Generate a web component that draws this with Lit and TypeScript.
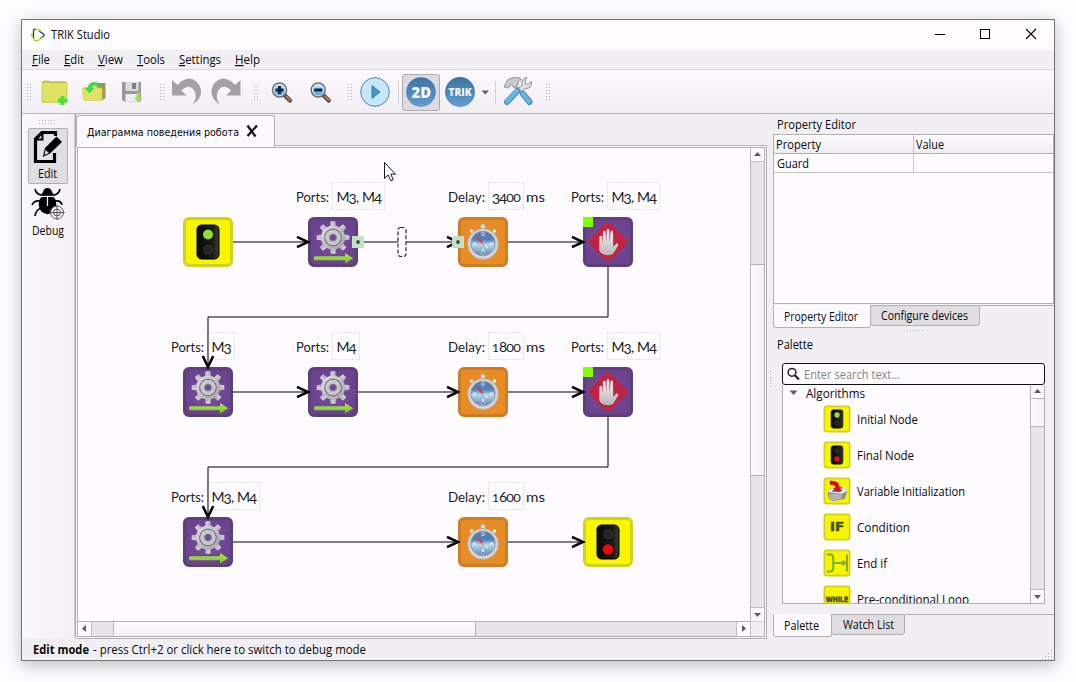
import { LitElement, html, svg, css, nothing } from "lit";
import { customElement } from "lit/decorators.js";

type Kind = "start" | "finish" | "motor" | "timer" | "stop" | "variable" | "if" | "endif" | "while";

interface Block {
  kind: Kind;
  x: number;
  y: number;
  label?: string;
  value?: string;
}

const BLOCKS: Block[] = [
  { kind: "start", x: 208, y: 242 },
  { kind: "motor", x: 333, y: 242, label: "Ports:", value: "M3, M4" },
  { kind: "timer", x: 483, y: 242, label: "Delay:", value: "3400" },
  { kind: "stop", x: 608, y: 242, label: "Ports:", value: "M3, M4" },
  { kind: "motor", x: 208, y: 392, label: "Ports:", value: "M3" },
  { kind: "motor", x: 333, y: 392, label: "Ports:", value: "M4" },
  { kind: "timer", x: 483, y: 392, label: "Delay:", value: "1800" },
  { kind: "stop", x: 608, y: 392, label: "Ports:", value: "M3, M4" },
  { kind: "motor", x: 208, y: 542, label: "Ports:", value: "M3, M4" },
  { kind: "timer", x: 483, y: 542, label: "Delay:", value: "1600" },
  { kind: "finish", x: 608, y: 542 },
];

const LINKS = [
  "M233 242H308", "M358 242H458", "M508 242H583",
  "M608 267V317H208V367",
  "M233 392H308", "M358 392H458", "M508 392H583",
  "M608 417V467H208V517",
  "M233 542H458", "M508 542H583",
];

const HEADS_RIGHT = [[308, 242], [458, 242], [583, 242], [308, 392], [458, 392], [583, 392], [458, 542], [583, 542]];
const HEADS_DOWN = [[208, 367], [208, 517]];

const PALETTE: { kind: Kind; name: string; width: number }[] = [
  { kind: "start", name: "Initial Node", width: 61 },
  { kind: "finish", name: "Final Node", width: 57 },
  { kind: "variable", name: "Variable Initialization", width: 108 },
  { kind: "if", name: "Condition", width: 53 },
  { kind: "endif", name: "End if", width: 30 },
  { kind: "while", name: "Pre-conditional Loop", width: 112 },
];

const MENUS: [string, number][] = [["File", 18], ["Edit", 20], ["View", 25], ["Tools", 28], ["Settings", 42], ["Help", 25]];

/* One line of text set to an exact advance width. */
const line = (text: string, width: number, cls = "", mnemonic = false) => html`
  <svg class="line ${cls}" width=${width} height="16">
    ${mnemonic
      ? svg`<text y="12" textLength=${width} lengthAdjust="spacingAndGlyphs"><tspan text-decoration="underline">${text[0]}</tspan>${text.slice(1)}</text>`
      : svg`<text y="12" textLength=${width} lengthAdjust="spacingAndGlyphs">${text}</text>`}
  </svg>`;

const FRAMES: Record<string, [string, string]> = {
  yellow: ["#f7f500", "#d3d01f"],
  purple: ["url(#purple)", "#5d3f7c"],
  orange: ["#e88c25", "#cd7d25"],
};

const frame = (name: string) => svg`
  <rect x="-23.5" y="-23.5" width="47" height="47" rx="4.5" fill=${FRAMES[name][0]} stroke=${FRAMES[name][1]} stroke-width="3"/>`;

const TEETH = [0, 45, 90, 135, 180, 225, 270, 315];

const trafficLight = (go: boolean) => svg`
  ${frame("yellow")}
  <rect x="-11" y="-17" width="22" height="34" rx="4.5" fill="url(#lamp)" stroke="#000"/>
  <circle cx="0" cy="-7.5" r=${go ? 5 : 4} fill=${go ? "#92dc35" : "#222"} stroke=${go ? "none" : "#3a3a3a"}/>
  <circle cx="0" cy="7.5" r=${go ? 4 : 5.2} fill=${go ? "#222" : "#ee0808"} stroke=${go ? "#3a3a3a" : "none"}/>`;

const glyph = (kind: Kind) => {
  switch (kind) {
    case "start": return trafficLight(true);
    case "finish": return trafficLight(false);
    case "motor": return svg`
      ${frame("purple")}
      <g transform="translate(0 -4.5)">
        ${TEETH.map(a => svg`<path transform="rotate(${a})" d="M-3 -10L-2.3 -16.3H2.3L3 -10Z" fill="url(#steel)"/>`)}
        <circle r="12" fill="url(#steel)"/>
        <circle r="8.3" fill="none" stroke="#77757c" stroke-width="1.2"/>
        <circle r="6" fill="none" stroke="#c9c8ce" stroke-width="3"/>
        <circle r="3.4" fill="#71499a" stroke="#85828a"/>
      </g>
      <path d="M-18.5 14.2H12V11L20.3 16.2L12 21.5V18.2H-18.5Q-20 16.2 -18.5 14.2Z" fill="url(#green)"/>`;
    case "timer": return svg`
      ${frame("orange")}
      <circle cx="0" cy="-15.5" r="2.3" fill="#e6e6ea" stroke="#a9a6a4" stroke-width=".7"/>
      <circle cx="-11.5" cy="-11" r="1.7" fill="#f1eff0"/><circle cx="11.5" cy="-11" r="1.7" fill="#f1eff0"/>
      <circle cx="0" cy="2" r="15.4" fill="#d5d5da" stroke="#b5aaa4" stroke-width=".8"/>
      <circle cx="0" cy="1.5" r="12.2" fill="url(#dial)" stroke="#8d97ab"/>
      <path d="M0 -9v3M0 10v-3M-10 1.5h3M10 1.5h-3" stroke="#dfe6f0" stroke-width="2"/>
      <circle cx="0" cy="-8" r="1.6" fill="#607ba4" stroke="#d6deea" stroke-width=".8"/><circle cx="0" cy="11" r="1.6" fill="#607ba4" stroke="#d6deea" stroke-width=".6"/>
      <path d="M-6 -5L1 3" stroke="#e2384f" stroke-width="2"/><path d="M0 2L5 6" stroke="#e4e6ea" stroke-width="1.4"/>
      <circle cx="0" cy="2" r="1.6" fill="#a9b5c8"/>`;
    case "stop": return svg`
      ${frame("purple")}
      <rect x="-15" y="-15" width="30" height="30" rx="5" transform="rotate(45)" fill="#bd2442"/>
      <path d="M-8.8 8L-8.5 -5.5Q-7.2 -7 -6.2 -5.5L-5.6 1.2L-5 -10.5Q-3.8 -12 -2.5 -10.5L-1.9 0L-1.2 -12.3Q0 -13.7 1.2 -12.3L1.6 0L2.6 -10.8Q3.9 -12.2 5 -10.5L5.3 5L8.5 1.2Q10.5 1.2 10.3 3L6 10.5Q4.5 13.3 0 13.3Q-7.5 13 -8.8 8Z" fill="url(#hand)"/>`;
    case "variable": return svg`
      ${frame("yellow")}
      <path d="M-17 1L-11 -5L15 -5L19 1L14 15L-8 19L-16 13Z" fill="#8d8c8b"/><path d="M-18 2L-10 -5L14 -6L19 0L9 5Z" fill="#eeeef0"/><path d="M-15 5L9 6V15L-8 18L-15 13Z" fill="#b4b3b5"/><path d="M-10 1L-6 -3H11L6 2Z" fill="#55534f"/>
      <path d="M-13 -19Q4 -21 5 -7L10 -8L2 2L-8 -5L-3 -6Q-4 -13 -13 -11Z" fill="#d60c1e"/>`;
    case "if": return svg`${frame("yellow")}<text x="-13" y="8" class="badge" font-size="22" textLength="26" lengthAdjust="spacingAndGlyphs">IF</text>`;
    case "endif": return svg`
      ${frame("yellow")}
      <path d="M-19 -16H-13Q-7 -16 -7 -9V9Q-7 16 -13 16H-19M-7 0H14M10 -4L16 0L10 4" fill="none" stroke="#7cb62b" stroke-width="4"/><path d="M18.5 -16V16" stroke="#9ca023" stroke-width="3.5"/>`;
    case "while": return svg`${frame("yellow")}<text x="-21" y="5" class="badge" font-size="13" textLength="42" lengthAdjust="spacingAndGlyphs">WHILE</text>`;
  }
};

/* Digits in the scene are old-style: 3 and 4 descend, 0 and 1 are low. */
const figure = (ch: string, x: number, y: number) => {
  if ("34".includes(ch)) return svg`<text x=${x} y=${y + 2}>${ch}</text>`;
  if (ch === "0") return svg`<text x=${x} y=${y} style="font-size:11.8px" textLength="7.6" lengthAdjust="spacingAndGlyphs">0</text>`;
  if (ch === "1") return svg`<text x=${x} y=${y} style="font-size:12px">1</text>`;
  return svg`<text x=${x} y=${y}>${ch}</text>`;
};

const GLYPH_STEP: Record<string, number> = { M: 12, ",": 3, " ": 3, "3": 7.4, "4": 8.5 };

const sceneValue = (value: string, x: number, y: number) => {
  let cursor = x;
  const numeric = value[0] !== "M";
  return [...value].map(ch => {
    const at = cursor;
    cursor += numeric ? 7.1 : GLYPH_STEP[ch];
    return figure(ch, at, y);
  });
};

const caption = (b: Block) => {
  if (!b.label || !b.value) return nothing;
  const delay = b.label === "Delay:";
  const base = b.y - 40;
  const left = delay ? b.x - 35 : b.x - 37;
  const boxX = delay ? b.x + 5 : b.x - 1;
  const boxW = delay ? 36 : b.value.length > 2 ? 53 : 28;
  return svg`
    <text x=${left} y=${base} textLength=${delay ? 37 : 33} lengthAdjust="spacingAndGlyphs">${b.label}</text>
    <rect x=${boxX + 0.5} y=${b.y - 59.5} width=${boxW - 1} height="27" class="dotted"/>
    ${sceneValue(b.value, delay ? b.x + 9 : b.x + 3.5, base)}
    ${delay ? svg`<text x=${b.x + 43} y=${base} textLength="19" lengthAdjust="spacingAndGlyphs">ms</text>` : nothing}`;
};

const slot = (x: number, width: number, art: unknown) => html`
  <svg class="slot" width=${width} height="43" viewBox="${x} 70 ${width} 43">${art}</svg>`;

const grip = (x: number, y: number, cols: number, rows: number) =>
  Array.from({ length: cols * rows }, (_, i) =>
    svg`<rect x=${x + (i % cols) * 3} y=${y + Math.floor(i / cols) * 3} width="1" height="1" fill="#b4b2b6"/>`);

const lens = (cx: number, plus: boolean) => svg`
  <path d="M${cx + 5} 95L${cx + 10.5} 100.5" stroke="#5a4a42" stroke-width="4.5" stroke-linecap="round"/>
  <path d="M${cx + 7} 96.5L${cx + 10.5} 100" stroke="#a97852" stroke-width="2.4" stroke-linecap="round"/>
  <circle cx=${cx} cy="90" r="7" fill="url(#glass)" stroke="#6a6b70" stroke-width="1.5"/>
  <circle cx=${cx} cy="90" r="5.8" fill="none" stroke="#cfe3f1"/>
  <path d=${plus ? `M${cx - 4} 90H${cx + 4}M${cx} 86V94` : `M${cx - 4} 90H${cx + 4}`} stroke="#06284f" stroke-width="3"/>`;

const arrowButton = (dir: string) => {
  const d: Record<string, string> = {
    up: "M3.5 8.5L7 4.5L10.5 8.5Z", down: "M3.5 5.5L7 9.5L10.5 5.5Z",
    left: "M8.5 3.5L4.5 7L8.5 10.5Z", right: "M5.5 3.5L9.5 7L5.5 10.5Z",
  };
  return html`<svg class="arrow" width="13" height="13" viewBox="0.5 0.5 13 13"><path d=${d[dir]} fill="#5b595d"/></svg>`;
};

@customElement("app-root")
export class AppRoot extends LitElement {
  static styles = css`
    :host { display: block; width: 1076px; height: 682px; overflow: hidden; background: #fdfcfe; box-sizing: border-box; padding: 19px 21px 21px; font-family: "Open Sans", "Noto Sans", sans-serif; font-size: 12px; color: #0b0b0c; }
    * { box-sizing: border-box; }
    svg { display: block; flex: none; }
    .line { overflow: visible; }
    .line text { font-family: "Open Sans", "Noto Sans", sans-serif; font-size: 12px; fill: #09090b; }
    .line.bold text { font-weight: 700; }
    .line.hint text { fill: #858388; }
    .line.cyr text { font-family: "DejaVu Sans", sans-serif; font-size: 11.2px; }
    .window { width: 1034px; height: 642px; border: 1px solid #737275; background: #f1eff3; display: flex; flex-direction: column; box-shadow: 0 4px 16px rgba(0,0,0,.26); }
    .title { height: 30px; flex: none; background: #fefcff; display: flex; align-items: center; padding-left: 9px; }
    .title .line { margin-left: 6px; }
    .controls { margin-left: auto; }
    .menu { height: 20px; flex: none; display: flex; gap: 14px; padding: 2px 10px; border-bottom: 1px solid #d9d7db; }
    .tools { height: 44px; flex: none; display: flex; border-bottom: 1px solid #b7b5b9; background: linear-gradient(#fbf9fd, #f1eff3); }
    .main { height: 524px; flex: none; display: flex; }
    .modes { width: 53px; flex: none; background: linear-gradient(90deg, #faf8fc, #f2f0f4); border-right: 1px solid #d0ced2; display: flex; flex-direction: column; align-items: center; padding-top: 5px; }
    .mode { width: 40px; height: 56px; border: 1px solid transparent; border-radius: 2px; display: flex; flex-direction: column; align-items: center; justify-content: space-between; padding: 1px 0 1px; margin-right: 1px; }
    .mode.on { background: #dfdde1; border-color: #b2b0b4; }
    .mode.second { margin-top: 1px; }
    .editor { width: 692px; flex: none; display: flex; flex-direction: column; padding-top: 1px; height: 523px; border-left: 1px solid #aaa8ac; }
    .tabbar { height: 30px; flex: none; display: flex; }
    .doc { width: 199px; height: 32px; flex: none; background: #fbf9fd; border: 1px solid #b2b0b4; border-bottom: none; border-radius: 3px 3px 0 0; padding: 8px 0 0 10px; display: flex; gap: 7px; z-index: 1; }
    .rest { flex: 1; border-bottom: 1px solid #b2b0b4; height: 31px; }
    .outer { flex: 1; border: 1px solid #b2b0b4; border-left: none; border-top: none; padding: 1px 1px 1px 1px; margin-top: 1px; background: #f7f5f9; }
    .view { height: 100%; border: 1px solid #b2b0b4; display: grid; grid-template-columns: 672px 14px; grid-template-rows: 1fr 15px; background: #fdfbfe; }
    .canvas { overflow: hidden; width: 672px; height: 473px; }
    .canvas text { font-family: Lato, "Open Sans", sans-serif; font-size: 14px; fill: #1b1b1e; }
    .dotted { fill: none; stroke: #c9c5cb; stroke-dasharray: 1 2; }
    .vbar { border-left: 1px solid #b7b5b9; display: flex; flex-direction: column; }
    .hbar { border-top: 1px solid #b7b5b9; display: flex; }
    .arrow { background: #fbf9fd; }
    .trackv { border-top: 1px solid #c0bec2; background: #e6e4e8; }
    .thumbv { border-top: 1px solid #b7b5b9; border-bottom: 1px solid #b7b5b9; background: linear-gradient(90deg, #fdfbff, #f2f0f4); }
    .trackh { border-left: 1px solid #c0bec2; background: #e6e4e8; }
    .thumbh { border-left: 1px solid #b7b5b9; border-right: 1px solid #b7b5b9; background: linear-gradient(#fdfbff, #f2f0f4); }
    .v1 { height: 103px; } .v2 { height: 212px; } .v3 { flex: 1; border: 0; border-bottom: 1px solid #c0bec2; }
    .h1 { width: 22px; } .h2 { width: 363px; } .h3 { flex: 1; border: 0; border-right: 1px solid #c0bec2; }
    .corner { border-top: 1px solid #d1cfd3; border-left: 1px solid #c0bec2; background: #f1eff3; }
    .split { width: 6px; flex: none; padding: 256px 0 0 2px; }
    .side { flex: 1; display: flex; flex-direction: column; }
    .heading { height: 20px; flex: none; padding: 3px 0 0 4px; }
    .table { height: 170px; flex: none; border: 1px solid #b2b0b4; background: #fdfbfe; }
    .row { display: grid; grid-template-columns: 140px 1fr; height: 19px; border-bottom: 1px solid #c6c4c8; }
    .row.head { background: linear-gradient(#fdfbfe, #efedf1); border-color: #b2b0b4; }
    .cell { padding: 2px 0 0 2px; }
    .cell:first-child { border-right: 1px solid #c6c4c8; }
    .row:not(.head) .cell { padding-left: 3px; }
    .tabs { display: flex; align-items: flex-start; flex: none; }
    .tab { border: 1px solid #b2b0b4; border-radius: 0 0 3px 3px; background: #dfdde1; }
    .tab.on { background: #fbf9fd; border-top: none; }
    .gap { height: 1px; flex: none; background: #f5f3f7; }
    .topline { flex: 1; border-top: 1px solid #b2b0b4; }
    .upper .tab { height: 21px; padding: 2px 0 0 10px; width: 110px; }
    .upper .tab.on { height: 23px; width: 98px; padding-top: 4px; margin-right: -1px; z-index: 1; }
    .mid { height: 35px; flex: none; padding-left: 4px; }
    .mid .line { margin-top: 4px; }
    .search { height: 22px; width: 263px; margin-left: 9px; flex: none; border: 1.5px solid #111; border-radius: 3px; background: #fdfbfe; display: flex; align-items: center; padding-left: 4px; gap: 4px; }
    .search .line { margin-top: 2px; }
    .list { width: 263px; height: 219px; margin-left: 9px; flex: none; border: 1px solid #b2b0b4; border-top: none; background: #fdfbfe; display: flex; overflow: hidden; }
    .tree { width: 247px; flex: none; overflow: hidden; }
    .group { display: flex; height: 16px; padding-left: 6px; gap: 8px; }
    .group .line { margin-top: 1px; }
    .item { display: flex; height: 36px; align-items: center; padding-left: 40px; gap: 6px; }
    .item .line { margin-top: 2px; }
    .listbar { width: 14px; flex: none; border-left: 1px solid #b7b5b9; display: flex; flex-direction: column; }
    .l2 { height: 29px; }
    .lower { margin-top: 10px; }
    .lower .tab { width: 74px; height: 21px; padding: 2px 0 0 11px; margin-left: -1px; }
    .lower .tab.on { width: 59px; height: 23px; padding: 4px 0 0 10px; margin-left: 0; z-index: 1; }
    .status { flex: 1; display: flex; padding: 4px 0 0 11px; gap: 4px; }
    .status .grip { margin: 8px 1px 0 auto; }
    .badge { font-family: "DejaVu Sans", sans-serif; font-weight: 800; fill: #4c4c2a; stroke: #4c4c2a; stroke-width: 1; }
    .round { font-family: "Open Sans", sans-serif; font-weight: 800; fill: #f4f8fb; }
  `;

  private toolbar() {
    return html`<div class="tools">
      ${slot(22, 14, grip(27, 84, 2, 6))}
      ${slot(36, 39, svg`<path d="M42 82.5L44 81H49L50 82.5H67V102.5H42Z" fill="#dfe262" stroke="#c3c552" stroke-width=".8"/><path d="M42 82H66" stroke="#a5a64c"/><path d="M62.5 96V105M58 100.5H67" stroke="#52da3f" stroke-width="4"/>`)}
      ${slot(75, 38, svg`<path d="M95 83H105.5V98L102 100.5Z" fill="#9c9852"/><path d="M82 88H102V100.5H84Z" fill="#dfe262" stroke="#cfd04f" stroke-width=".7"/><path d="M98 83Q89 81 88 88H85L89.5 93L94 88H91Q92 85 98 85.5Z" fill="#42dc44" stroke="#42dc44"/>`)}
      ${slot(113, 39, svg`<path d="M122 82H141V101.5H124L122 99.5Z" fill="#98969a"/><path d="M125.500 82H138.500V91H125.500Z" fill="#dbd9dd"/><path d="M132 83H136V89H132Z" fill="#808083"/><path d="M125.500 94H138.500V101.500H125.500Z" fill="#edecee"/><path d="M136.500 92.500H140V97.500H142.500L138.300 102.500L134 97.500H136.500Z" fill="#99e03c"/>`)}
      ${slot(152, 16, grip(160, 84, 2, 6))}
      ${slot(168, 39, svg`<path d="M172 80V95.500H186.500L181.500 90.500Q189 83.500 194 90Q198 96 193 104.500Q202 98.500 201 89.500Q198.500 80 190 78.500Q183 78.500 177.500 85Z" fill="#a3a1a5"/>`)}
      ${slot(207, 43, svg`<path d="M240.500 80V95.500H226L231 90.500Q223.500 83.500 218.500 90Q214.500 96 219.500 104.500Q210.500 98.500 211.500 89.500Q214 80 222.500 78.500Q229.500 78.500 235 85Z" fill="#a3a1a5"/>`)}
      ${slot(250, 13, grip(254, 84, 2, 6))}
      ${slot(263, 38, lens(279.5, true))}
      ${slot(301, 40, lens(318.2, false))}
      ${slot(341, 15, grip(348, 84, 2, 6))}
      ${slot(356, 38, svg`<circle cx="375" cy="92" r="14.300" fill="#c6e6fa" stroke="#4d86b3" stroke-width="1"/><path d="M372 85.500L380 92L372 98.500Z" fill="#4596d2" stroke="#2e6fa5" stroke-width=".8"/>`)}
      ${slot(394, 7, svg`<path d="M398.500 81V104" stroke="#d3d1d5"/>`)}
      ${slot(401, 40, svg`<rect x="402.500" y="74.500" width="37" height="36" rx="2" fill="#dddbdf" stroke="#adabaf"/><circle cx="421" cy="92" r="14.800" fill="url(#blue)"/><text x="411.500" y="97.500" class="round" font-size="15" textLength="19.500" lengthAdjust="spacingAndGlyphs">2D</text>`)}
      ${slot(441, 51, svg`<circle cx="460" cy="92" r="15" fill="url(#blue)"/><text x="448.500" y="95.800" class="round" font-size="10" textLength="23" lengthAdjust="spacingAndGlyphs">TRIK</text><path d="M481.500 90.500H489L485.200 94.500Z" fill="#615f63"/>`)}
      ${slot(492, 7, svg`<path d="M495.500 81V104" stroke="#d3d1d5"/>`)}
      ${slot(499, 38, svg`
        <path d="M513 84L524 95" stroke="#b4b2b7" stroke-width="4"/>
        <path d="M504 87L507.500 80Q512 76.500 520 78L521 80Q517 80 518.500 84L514.500 88L511 84.500L508.500 88Z" fill="#cccacf" stroke="#88868a" stroke-width=".9"/>
        <path d="M527 77.500Q520.500 78.500 522 85L518 89L521.500 92L525.500 88.500Q532 89 531.500 81L528 84.500L525 82.500L525.500 79.500Z" fill="#dddbe0" stroke="#88868a" stroke-width=".9"/>
        <path d="M517.500 91L507 102" stroke="#4589bb" stroke-width="6" stroke-linecap="round"/><path d="M517 91L507 101.500" stroke="#69b4e6" stroke-width="4.300" stroke-linecap="round"/>
        <path d="M523 94L529.500 102" stroke="#4589bb" stroke-width="6" stroke-linecap="round"/><path d="M523 94L529 101.500" stroke="#69b4e6" stroke-width="4.300" stroke-linecap="round"/>`)}
      ${slot(537, 23, grip(546, 84, 2, 6))}
    </div>`;
  }

  private scene() {
    return html`<svg class="canvas" width="672" height="473" viewBox="78 148 672 473">
      <defs>
        <radialGradient id="purple"><stop offset="0" stop-color="#7d51a5"/><stop offset="1" stop-color="#6a428e"/></radialGradient>
        <linearGradient id="steel" x1="0" y1="0" x2="1" y2="1"><stop offset="0" stop-color="#e1e0e3"/><stop offset="1" stop-color="#a3a1a7"/></linearGradient>
        <linearGradient id="green" x1="0" y1="0" x2="0" y2="1"><stop offset="0" stop-color="#a6ec4b"/><stop offset="1" stop-color="#79bd27"/></linearGradient>
        <linearGradient id="dial" x1="0" y1="0" x2="0" y2="1"><stop offset="0" stop-color="#5476ae"/><stop offset=".35" stop-color="#4f82bd"/><stop offset=".55" stop-color="#b8d9e8"/><stop offset="1" stop-color="#5e86ba"/></linearGradient>
        <linearGradient id="hand" x1="0" y1="0" x2="0" y2="1"><stop offset="0" stop-color="#f8f4f5"/><stop offset="1" stop-color="#b9b4b8"/></linearGradient>
        <linearGradient id="lamp"><stop offset="0" stop-color="#080808"/><stop offset=".7" stop-color="#1b1b1b"/><stop offset="1" stop-color="#3b3b3b"/></linearGradient>
        <linearGradient id="blue" x1="0" y1="0" x2="0" y2="1"><stop offset="0" stop-color="#3c74a6"/><stop offset="1" stop-color="#619dce"/></linearGradient>
        <linearGradient id="glass" x1="0" y1="0" x2="0" y2="1"><stop offset="0" stop-color="#dff2fd"/><stop offset="1" stop-color="#4d95cb"/></linearGradient>
      </defs>
      ${BLOCKS.map(caption)}
      ${LINKS.map(d => svg`<path d=${d} fill="none" stroke="#000"/>`)}
      ${BLOCKS.map(b => svg`<g transform="translate(${b.x} ${b.y})">${glyph(b.kind)}</g>`)}
      ${HEADS_RIGHT.map(([x, y]) => svg`<path d="M${x - 11} ${y - 5.2}L${x} ${y}L${x - 11} ${y + 5.2}" fill="none" stroke="#000" stroke-width="2.500"/>`)}
      ${HEADS_DOWN.map(([x, y]) => svg`<path d="M${x - 5.2} ${y - 11}L${x} ${y}L${x + 5.2} ${y - 11}" fill="none" stroke="#000" stroke-width="2.500"/>`)}
      <rect x="583" y="217" width="10" height="10" fill="#80ff00"/><rect x="583" y="367" width="10" height="10" fill="#80ff00"/>
      <rect x="352" y="236" width="12" height="12" fill="#c5dfc8"/><circle cx="358" cy="242" r="1.900" fill="#345438"/>
      <rect x="452" y="236" width="12" height="12" fill="#c5dfc8"/><circle cx="458" cy="242" r="1.900" fill="#345438"/>
      <rect x="398" y="227.500" width="8" height="29" rx="2.500" fill="#fdfbfe" stroke="#2a2a2d" stroke-width="1.200" stroke-dasharray="4 2"/>
      <path d="M384.500 162.500V178.500L388.200 175L390.800 180.800L393.300 179.700L390.800 174.200H395.500Z" fill="#fff" stroke="#161618"/>
    </svg>`;
  }

  render() {
    return html`<div class="window">
      <div class="title">
        <svg width="14" height="16" viewBox="31 26 14 16"><path d="M33.500 37V29.500Q34 27.500 36 28.500M39 30L43.500 33Q45 34 43.500 35.200L40 37.500" fill="none" stroke="#283c46" stroke-width="1.300"/><path d="M32 36V32M37 28L41 30M43 36L38 39.500Q34 41 34 37" fill="none" stroke="#a4d13b" stroke-width="1.500"/></svg>
        ${line("TRIK Studio", 59)}
        <svg class="controls" width="124" height="30" viewBox="930 20 124 30"><path d="M935 34.500H945" stroke="#000"/><rect x="980.500" y="29.500" width="9" height="9" fill="none" stroke="#000"/><path d="M1026 29L1036 39M1036 29L1026 39" stroke="#000" stroke-width="1.100"/></svg>
      </div>
      <div class="menu">${MENUS.map(([name, w]) => line(name, w, "", true))}</div>
      ${this.toolbar()}
      <div class="main">
        <div class="modes">
          <svg width="20" height="9" viewBox="0 0 20 9">${grip(1, 1, 6, 2)}</svg>
          <div class="mode on">
            <svg width="32" height="34" viewBox="32 130 32 34"><path d="M40.500 132.500H54.500V137L49 142.500L44 150L42.500 157L50 154.500L54.500 150V161.500H35.500V138Z" fill="#e4e2e6"/><path d="M55.500 136V132.500H42L35.500 139V161.500H54.500V153" fill="none" stroke="#000" stroke-width="3.200"/><path d="M42.500 131.500V139.500H35" fill="none" stroke="#000" stroke-width="2"/><path d="M56.500 136.500L62 142L50 153.500L42.800 157L45 148Z" fill="#000"/><path d="M45.500 150L49 153L44.500 155Z" fill="#ddd"/></svg>
            ${line("Edit", 19)}
          </div>
          <div class="mode second">
            <svg width="34" height="34" viewBox="31 187 34 34"><path d="M35 189Q36 194 41 195M60 189Q59 194 54 195M32 205Q34 200 40 201M62 205Q61 200 55 201M35 216Q36 209 42 208" fill="none" stroke="#000" stroke-width="1.600"/><path d="M43 192Q44 188 47.500 188Q51 188 52 192L55 196Q48 194 40 196Z" fill="#000"/><ellipse cx="47.500" cy="204" rx="8.800" ry="10.200" fill="#000"/><path d="M40 197Q47.500 195.500 55 197M47.500 196.500V206" stroke="#f8f6fa" stroke-width="1.200" fill="none"/><circle cx="57" cy="212.500" r="6.500" fill="#f8f6fa" stroke="#59575b"/><circle cx="57" cy="212.500" r="3.500" fill="none" stroke="#59575b"/><path d="M49.500 212.500H64.500M57 205V220" stroke="#59575b"/></svg>
            ${line("Debug", 32)}
          </div>
        </div>
        <div class="editor">
          <div class="tabbar">
            <div class="doc">${line("Диаграмма поведения робота", 152, "cyr")}<svg width="13" height="14" viewBox="0 0 13 14"><path d="M1.500 1.500L9.500 12.500M11 1.500L1.500 12" stroke="#161618" stroke-width="2.300"/></svg></div>
            <div class="rest"></div>
          </div>
          <div class="outer"><div class="view">
            ${this.scene()}
            <div class="vbar">${arrowButton("up")}<div class="trackv v1"></div><div class="thumbv v2"></div><div class="trackv v3"></div>${arrowButton("down")}</div>
            <div class="hbar">${arrowButton("left")}<div class="trackh h1"></div><div class="thumbh h2"></div><div class="trackh h3"></div>${arrowButton("right")}</div>
            <div class="corner"></div>
          </div></div>
        </div>
        <div class="split"><svg width="3" height="18" viewBox="0 0 3 18">${grip(1, 1, 1, 6)}</svg></div>
        <div class="side">
          <div class="heading">${line("Property Editor", 79)}</div>
          <div class="table">
            <div class="row head"><div class="cell">${line("Property", 45)}</div><div class="cell">${line("Value", 28)}</div></div>
            <div class="row"><div class="cell">${line("Guard", 32)}</div><div class="cell"></div></div>
          </div>
          <div class="gap"></div>
          <div class="tabs upper"><div class="tab on">${line("Property Editor", 74)}</div><div class="tab">${line("Configure devices", 87)}</div><div class="topline"></div></div>
          <div class="mid"><svg width="150" height="5" viewBox="777 329 150 5">${grip(907, 331, 6, 1)}</svg>${line("Palette", 36)}</div>
          <div class="search">
            <svg width="13" height="14" viewBox="0 0 13 14"><circle cx="5" cy="5.300" r="3.900" fill="none" stroke="#202022" stroke-width="1.500"/><path d="M7.800 8.300L12 12.500" stroke="#202022" stroke-width="2.200"/></svg>
            ${line("Enter search text...", 96, "hint")}
          </div>
          <div class="list">
            <div class="tree">
              <div class="group"><svg width="9" height="14" viewBox="0 0 9 14"><path d="M.5 5.500H8.500L4.500 10Z" fill="#626064"/></svg>${line("Algorithms", 59)}</div>
              ${PALETTE.map(p => html`<div class="item"><svg width="28" height="28" viewBox="-26 -26 52 52">${glyph(p.kind)}</svg>${line(p.name, p.width)}</div>`)}
            </div>
            <div class="listbar">${arrowButton("up")}<div class="thumbv l2"></div><div class="trackv v3"></div>${arrowButton("down")}</div>
          </div>
          <div class="tabs lower"><div class="tab on">${line("Palette", 35)}</div><div class="tab">${line("Watch List", 51)}</div><div class="topline"></div></div>
        </div>
      </div>
      <div class="status">${line("Edit mode", 56, "bold")}${line("- press Ctrl+2 or click here to switch to debug mode", 273)}
        <svg class="grip" width="11" height="11" viewBox="0 0 11 11">${[0, 1, 2, 3].map(r => Array.from({ length: r + 1 }, (_, i) => svg`<rect x=${9 - i * 3} y=${r * 3} width="1" height="1" fill="#b4b2b6"/>`))}</svg>
      </div>
    </div>`;
  }
}
